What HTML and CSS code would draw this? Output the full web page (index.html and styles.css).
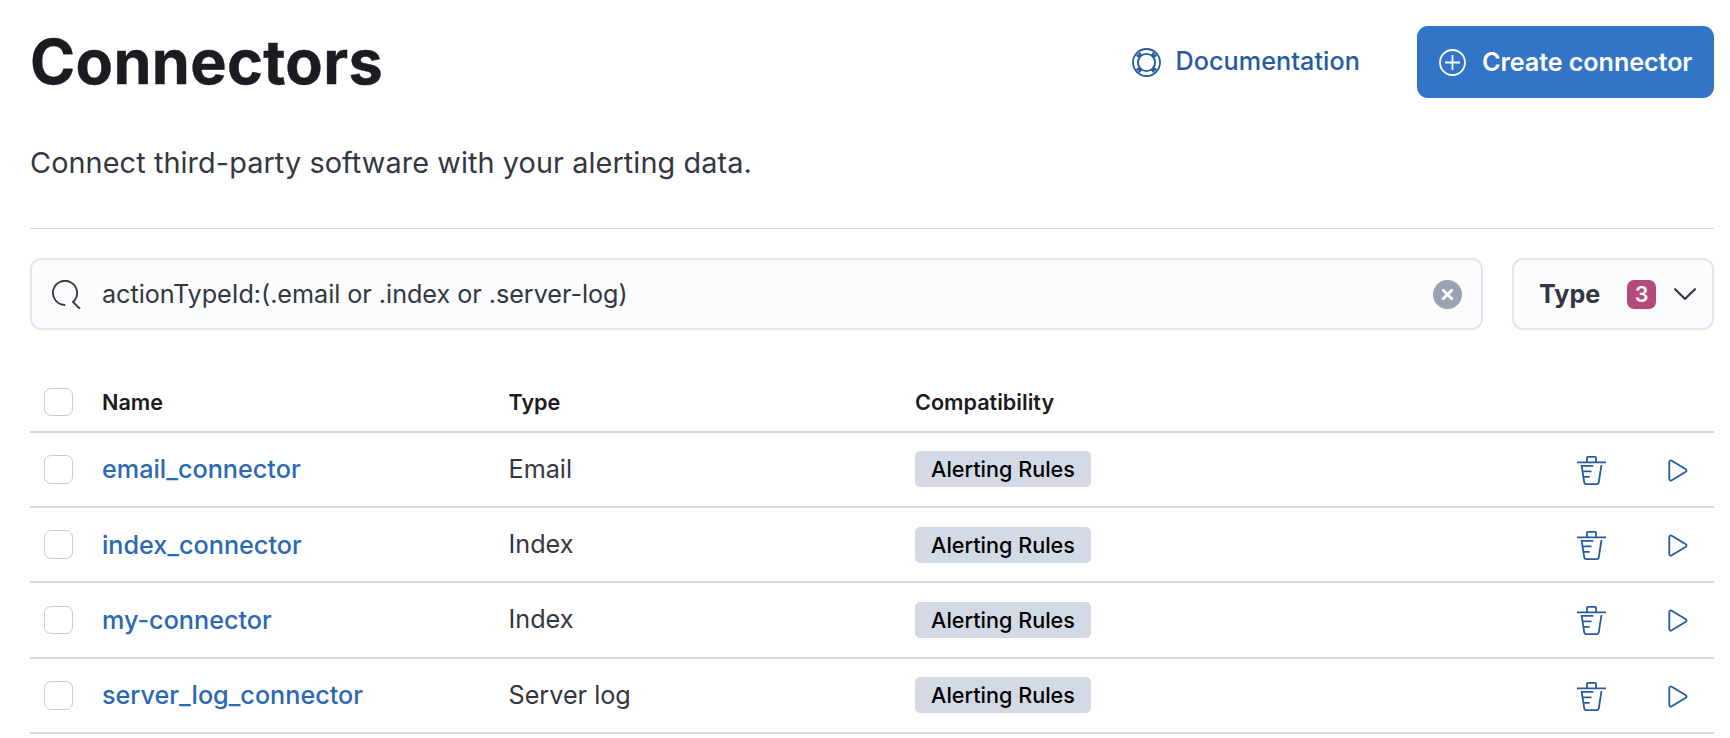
FILE: index.html
```html
<!DOCTYPE html>
<html lang="en">
<head>
<meta charset="utf-8">
<title>Connectors</title>
<link rel="stylesheet" href="styles.css">
</head>
<body>
<svg class="sprite" aria-hidden="true">
  <symbol id="trash" viewBox="0 0 16 16"><path d="M11 3h5v1H0V3h5V1a1 1 0 0 1 1-1h4a1 1 0 0 1 1 1v2zm-7.056 8H7v1H4.1l.392 2.519c.042.269.254.458.493.458h6.03c.239 0 .451-.189.493-.458l1.498-9.576H14l-1.504 9.73c-.116.747-.74 1.304-1.481 1.304h-6.03c-.741 0-1.365-.557-1.481-1.304l-1.511-9.73H9V5.95H3.157L3.476 8H8v1H3.632l.312 2zM6 3h4V1H6v2z"/></symbol>
  <symbol id="play" viewBox="0 0 20 23"><path d="M3.8 21.2c-1.2.8-2.5.1-2.5-1.3V3.1c0-1.4 1.3-2.1 2.5-1.3l14 8.4c1 .7 1 1.9 0 2.6z" fill="none" stroke="currentColor" stroke-width="1.8"/></symbol>
</svg>
<main class="page">
  <header class="header">
    <h1 class="title">Connectors</h1>
    <div class="actions">
      <a class="docs">
        <svg class="docs-icon" viewBox="0 0 29 29" fill="none" stroke="currentColor"><circle cx="14.5" cy="14.5" r="13.5" stroke-width="1.8"/><circle cx="14.5" cy="14.5" r="8.6" stroke-width="1.9"/><path d="M6.9 4.7l2.2 3.1M4.7 6.9l3.1 2.2M22.1 4.7l-2.2 3.1M24.3 6.9l-3.1 2.2M6.9 24.3l2.2-3.1M4.7 22.1l3.1-2.2M22.1 24.3l-2.2-3.1M24.3 22.1l-3.1-2.2" stroke-width="2.4"/></svg>
        <span class="docs-label">Documentation</span>
      </a>
      <button class="create">
        <svg class="create-icon" viewBox="0 0 27 27" fill="none" stroke="currentColor" stroke-width="1.8"><circle cx="13.5" cy="13.5" r="12.5"/><path d="M13.5 6v15M6 13.5h15"/></svg>
        <span>Create connector</span>
      </button>
    </div>
  </header>
  <p class="subtitle">Connect third-party software with your alerting data.</p>
  <div class="filters">
    <div class="search">
      <svg class="search-icon" viewBox="0 0 29 29" fill="none" stroke="currentColor" stroke-width="1.8"><path d="M13.2 25A12.1 12.1 0 1 1 21 22l7 7"/></svg>
      <span class="query">actionTypeId:(.email or .index or .server-log)</span>
      <svg class="clear" viewBox="0 0 29 29"><circle cx="14.5" cy="14.5" r="14.5" fill="#98a2b3"/><path d="M10.2 10.2l8.6 8.6M18.8 10.2l-8.6 8.6" stroke="#fff" stroke-width="2.8" stroke-linecap="round"/></svg>
    </div>
    <button class="type-filter">
      <span class="type-label">Type</span>
      <span class="count">3</span>
      <svg class="chevron" viewBox="0 0 22 12" fill="none" stroke="currentColor" stroke-width="2.2" stroke-linecap="round" stroke-linejoin="round"><path d="M1.1 1.2l9.2 9.1q.7.6 1.4 0L20.9 1.2"/></svg>
    </button>
  </div>
  <section class="table">
    <div class="row head"><span class="check"></span><span>Name</span><span>Type</span><span>Compatibility</span></div>
    <div class="row"><span class="check"></span><a class="name raised">email_connector</a><span class="raised">Email</span><span class="badge raised">Alerting Rules</span><svg class="trash"><use href="#trash"/></svg><svg class="play"><use href="#play"/></svg></div>
    <div class="row"><span class="check"></span><a class="name">index_connector</a><span class="raised">Index</span><span class="badge">Alerting Rules</span><svg class="trash"><use href="#trash"/></svg><svg class="play"><use href="#play"/></svg></div>
    <div class="row tall"><span class="check"></span><a class="name">my-connector</a><span class="raised">Index</span><span class="badge">Alerting Rules</span><svg class="trash"><use href="#trash"/></svg><svg class="play"><use href="#play"/></svg></div>
    <div class="row"><span class="check"></span><a class="name raised">server_log_connector</a><span class="raised">Server log</span><span class="badge raised">Alerting Rules</span><svg class="trash"><use href="#trash"/></svg><svg class="play"><use href="#play"/></svg></div>
  </section>
</main>
</body>
</html>
```
FILE: styles.css
```css
* { box-sizing: border-box; }
body { margin: 0; background: #fff; color: #343741; font-family: Inter, sans-serif; font-size: 25.2px; overflow: hidden; }
button { font: inherit; color: inherit; margin: 0; }
.sprite { display: none; }
.page { height: 738px; padding: 26px 16px 0 30px; }
.header { display: flex; justify-content: space-between; height: 72px; }
.title { margin: 0; color: #1a1c21; font-size: 61.2px; font-weight: 700; line-height: 72px; letter-spacing: .3px; -webkit-text-stroke: .4px #1a1c21; }
.actions { display: flex; }
.docs { display: flex; align-items: center; color: #265c9f; font-weight: 500; line-height: 70px; margin-right: 57px; }
.docs-icon { width: 29px; height: 29px; margin-right: 14px; }
.docs-label { margin-top: -2px; letter-spacing: .07px; }
.create { display: flex; align-items: center; width: 297px; height: 72px; padding: 0 0 0 22px; border: 0; border-radius: 11px; background: #3275c8; color: #fff; font-weight: 600; letter-spacing: -.1px; white-space: nowrap; }
.create-icon { width: 27px; height: 27px; margin-right: 16px; flex: none; }
.subtitle { margin: 0; height: 131px; padding-top: 43px; font-size: 28.8px; line-height: 43px; letter-spacing: .1px; border-bottom: 1px solid #d3dae6; }
.filters { display: flex; justify-content: space-between; margin-top: 29px; }
.search, .type-filter { display: flex; align-items: center; height: 72px; border: 2px solid #e2e5f0; border-radius: 11px; background: #fbfcfe; }
.search { width: 1453px; padding: 0 19px 0 20px; }
.search-icon { width: 29px; height: 29px; margin-right: 21px; }
.query { flex: 1; letter-spacing: -.04px; }
.clear { width: 29px; height: 29px; }
.type-filter { width: 202px; padding: 0 0 0 25px; }
.type-label { width: 88px; text-align: left; font-weight: 700; }
.count { width: 29px; height: 29px; border-radius: 7px; background: #b44a7b; color: #fff; font-size: 21.6px; font-weight: 600; line-height: 29px; text-align: center; }
.chevron { width: 22px; height: 12px; margin-left: 18px; }
.table { margin-top: 42px; }
.row { display: grid; grid-template-columns: 58px 406.5px 406.5px 662px 91px 40px; align-items: center; height: 75px; padding-left: 14px; border-bottom: 2px solid #d3dae6; }
.tall { height: 76px; }
.head { height: 61px; color: #1a1c21; font-size: 21.6px; font-weight: 600; }
.check { width: 29px; height: 29px; border: 1px solid #c9cbcd; border-radius: 7px; background: #fff; }
.head .check { height: 28px; margin-top: 1px; }
.tall .check { height: 28px; margin-top: 0; }
.name { color: #2b68b5; font-weight: 500; }
.raised { margin-top: -2px; }
.badge { width: 176px; height: 36px; border-radius: 5px; background: #d3dae6; color: #000; font-size: 21.6px; font-weight: 500; line-height: 36px; text-align: center; }
.trash { width: 29px; height: 29px; margin-top: 2px; color: #265c9f; fill: currentColor; }
.play { width: 20px; height: 23px; margin: 2px 0 0 -.5px; color: #265c9f; }
.tall .trash, .tall .play { margin-top: 1px; }
```
